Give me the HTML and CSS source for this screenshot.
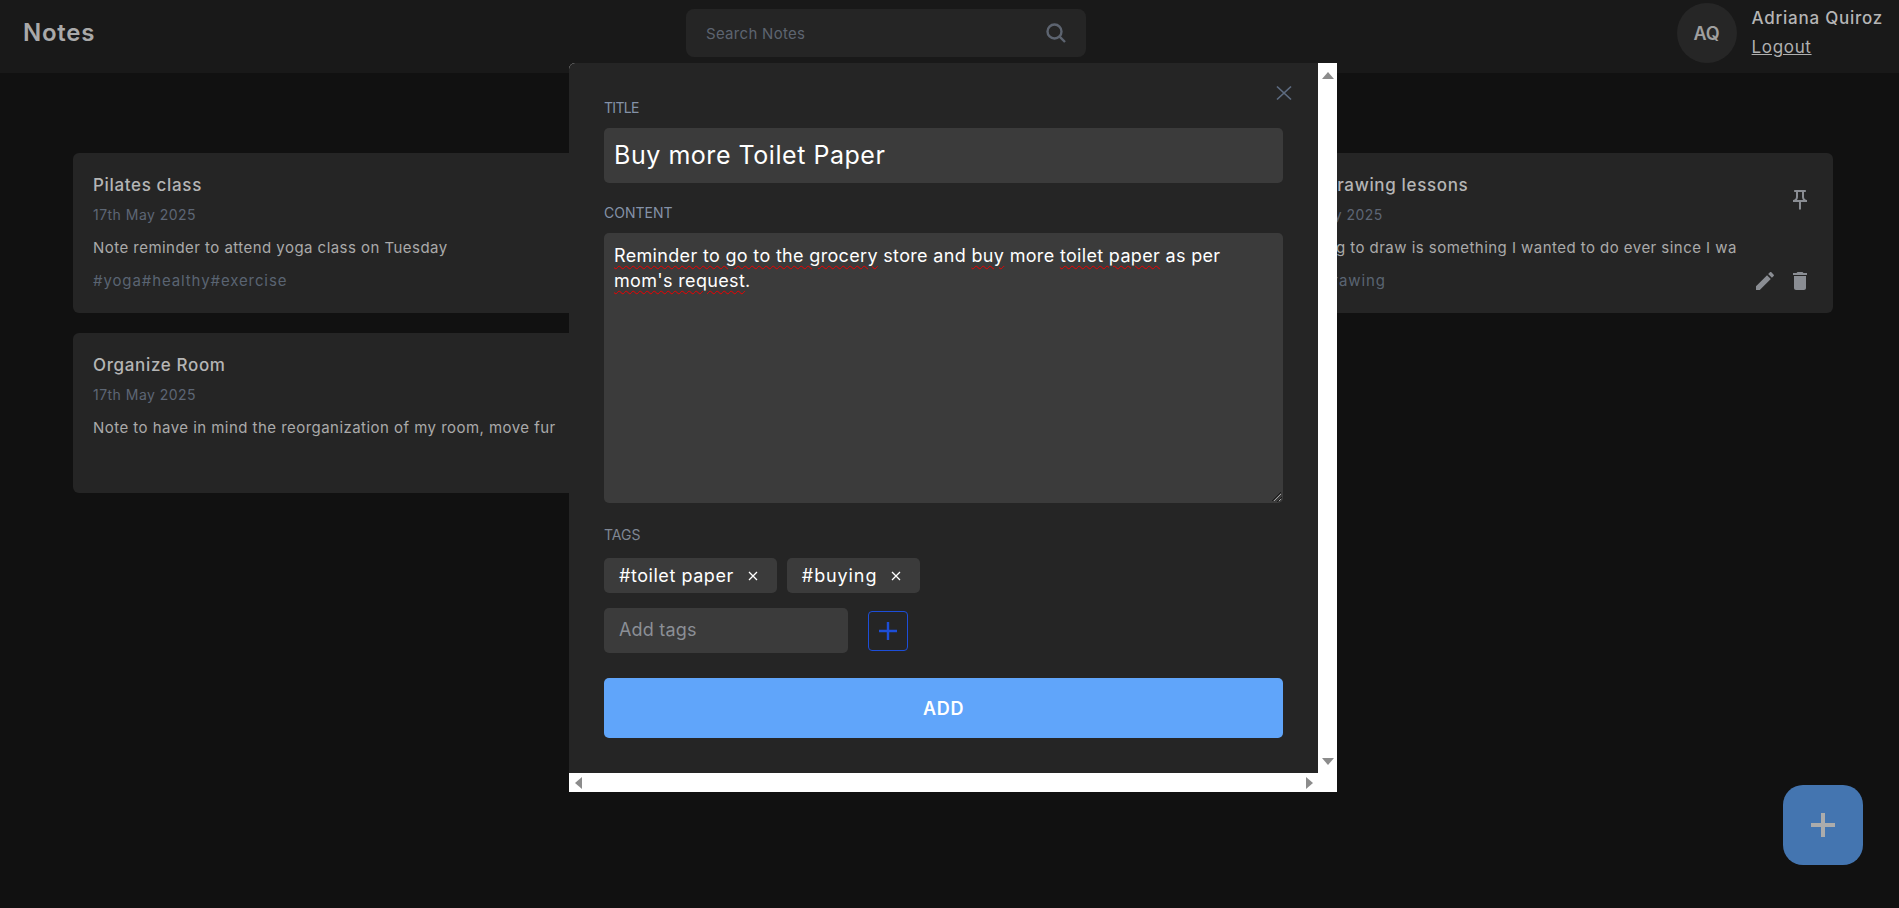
FILE: index.html
```html
<!DOCTYPE html>
<html lang="en">
<head>
<meta charset="utf-8">
<title>Notes</title>
<link rel="stylesheet" href="styles.css">
</head>
<body>
<header class="topbar">
  <h1 class="logo">Notes</h1>
  <div class="search">
    <span class="search-text">Search Notes</span>
    <svg class="search-icon" viewBox="0 0 24 24"><circle cx="10.5" cy="10.5" r="7"/><path d="M15.6 15.6 21 21"/></svg>
  </div>
  <div class="user">
    <div class="avatar">AQ</div>
    <div class="user-info">
      <div class="user-name">Adriana Quiroz</div>
      <a class="logout">Logout</a>
    </div>
  </div>
</header>

<main class="grid">
  <article class="card">
    <div class="card-body">
      <h2 class="card-title">Pilates class</h2>
      <p class="card-date">17th May 2025</p>
      <p class="card-text">Note reminder to attend yoga class on Tuesday</p>
      <p class="card-tags">#yoga#healthy#exercise</p>
    </div>
  </article>
  <article class="card"></article>
  <article class="card">
    <div class="card-body">
      <h2 class="card-title">Take drawing lessons</h2>
      <p class="card-date">17th May 2025</p>
      <p class="card-text">Learning to draw is something I wanted to do ever since I wa</p>
      <p class="card-tags">#art#drawing</p>
    </div>
    <div class="card-icons">
      <svg class="icon pin" viewBox="0 0 24 24"><path d="M14 4v5c0 1.12.37 2.16 1 3H9c.65-.86 1-1.9 1-3V4h4m3-2H7c-.55 0-1 .45-1 1s.45 1 1 1h1v5c0 1.66-1.34 3-3 3v2h5.97v7l1 1 1-1v-7H19v-2c-1.66 0-3-1.34-3-3V4h1c.55 0 1-.45 1-1s-.45-1-1-1z"/></svg>
      <div class="card-actions">
        <svg class="icon" viewBox="0 0 24 24"><path d="M3 17.25V21h3.75L17.81 9.94l-3.75-3.75L3 17.25zM20.71 7.04c.39-.39.39-1.02 0-1.41l-2.34-2.34c-.39-.39-1.02-.39-1.41 0l-1.83 1.83 3.75 3.75 1.83-1.83z"/></svg>
        <svg class="icon" viewBox="0 0 24 24"><path d="M6 19c0 1.1.9 2 2 2h8c1.1 0 2-.9 2-2V7H6v12zM19 4h-3.5l-1-1h-5l-1 1H5v2h14V4z"/></svg>
      </div>
    </div>
  </article>
  <article class="card">
    <div class="card-body">
      <h2 class="card-title">Organize Room</h2>
      <p class="card-date">17th May 2025</p>
      <p class="card-text">Note to have in mind the reorganization of my room, move fur</p>
    </div>
  </article>
</main>

<section class="modal">
  <div class="modal-main">
    <div class="modal-content">
      <svg class="close" viewBox="0 0 16 16"><path d="M1 1.5 15 14.5M15 1.5 1 14.5"/></svg>
      <div class="field">
        <label class="field-label title-label">TITLE</label>
        <div class="title-input">Buy more Toilet Paper</div>
      </div>
      <div class="field">
        <label class="field-label">CONTENT</label>
        <div class="content-input">
          <span class="typo">Reminder to go to the grocery</span> store and <span class="typo">buy</span> more <span class="typo">toilet paper</span> as per <span class="typo">mom's request</span>.
          <svg class="resizer" viewBox="0 0 10 10"><path class="resizer-dark" d="M0 9 9 0M5 10l5-5"/><path class="resizer-light" d="M2 9 9 2M7 9l2-2"/></svg>
        </div>
      </div>
      <div class="field tags-field">
        <label class="field-label tags-label">TAGS</label>
        <div class="chips">
          <span class="chip">#toilet paper<svg class="chip-x" viewBox="0 0 10 10"><path d="M1 1 9 9M9 1 1 9"/></svg></span>
          <span class="chip chip-short">#buying<svg class="chip-x" viewBox="0 0 10 10"><path d="M1 1 9 9M9 1 1 9"/></svg></span>
        </div>
        <div class="add-row">
          <div class="tag-input">Add tags</div>
          <div class="tag-add"><svg viewBox="0 0 20 20"><path d="M10 1v18M1 10h18"/></svg></div>
        </div>
      </div>
      <div class="submit">ADD</div>
    </div>
    <div class="vbar">
      <span class="arrow arrow-up"></span>
      <span class="arrow arrow-down"></span>
    </div>
  </div>
  <div class="hbar">
    <span class="arrow arrow-left"></span>
    <span class="arrow arrow-right"></span>
  </div>
</section>

<div class="fab"><svg viewBox="0 0 24 24"><path d="M12 0v24M0 12h24"/></svg></div>
</body>
</html>
```

FILE: styles.css
```css
* { box-sizing: border-box; }
html, body { margin: 0; height: 100%; }
body {
  background: #111111;
  font-family: Inter, "Open Sans", sans-serif;
  overflow: hidden;
  position: relative;
}
h1, h2, p { margin: 0; font-weight: inherit; }

.topbar {
  height: 73px;
  background: #191919;
  position: relative;
  display: flex;
  align-items: center;
  justify-content: space-between;
  padding: 0 16px 0 23px;
}
.logo { font-size: 24px; font-weight: 600; color: #a9a9a9; letter-spacing: 0.75px; line-height: 30px; margin-top: -7px; }
.search {
  position: absolute;
  left: 686px;
  top: 9px;
  width: 400px;
  height: 48px;
  background: #252525;
  border-radius: 8px;
  display: flex;
  align-items: center;
  justify-content: space-between;
  padding: 0 18px 0 20px;
  color: #5d6470;
  font-size: 15px;
  letter-spacing: 0.3px;
}
.search-icon { width: 24px; height: 24px; fill: none; stroke: #5d6470; stroke-width: 2.4; }
.user { display: flex; align-items: center; gap: 15px; height: 73px; padding-bottom: 7px; }
.avatar {
  width: 60px; height: 60px; border-radius: 50%;
  background: #262626; color: #a0a0a0;
  display: flex; align-items: center; justify-content: center;
  font-size: 18px; font-weight: 600;
}
.user-info { display: flex; flex-direction: column; gap: 5px; padding-bottom: 1px; }
.user-name { font-size: 17px; font-weight: 500; color: #b5b5b5; line-height: 24px; letter-spacing: 0.75px; }
.logout { font-size: 17px; color: #b0b0b0; line-height: 24px; text-decoration: underline; letter-spacing: 0.65px; }

.grid {
  display: grid;
  grid-template-columns: repeat(3, 1fr);
  gap: 20px;
  padding: 80px 66px 0 73px;
}
.card {
  height: 160px;
  background: #252525;
  border-radius: 6px;
  padding: 20px 21px 20px 20px;
  display: flex;
  gap: 12px;
}
.card-body { flex: 1; min-width: 0; }
.card-title { font-size: 17px; font-weight: 500; color: #b5b5b5; line-height: 24px; letter-spacing: 0.65px; white-space: nowrap; overflow: hidden; }
.card-date { font-size: 14px; color: #5d6675; line-height: 20px; letter-spacing: 0.47px; margin-top: 8px; white-space: nowrap; overflow: hidden; }
.card-text { font-size: 15px; color: #aaaaaa; line-height: 20px; letter-spacing: 0.46px; margin-top: 13px; white-space: nowrap; overflow: hidden; }
.card-tags { font-size: 15px; color: #5a6472; line-height: 20px; letter-spacing: 0.9px; margin-top: 13px; white-space: nowrap; overflow: hidden; }
.card-icons { width: 59px; flex: none; display: flex; flex-direction: column; align-items: flex-end; justify-content: space-between; }
.icon { width: 24px; height: 24px; fill: #8a8d93; display: block; }
.pin { margin-top: 15px; }
.card-actions { display: flex; gap: 11px; }

.modal {
  position: absolute;
  left: 569px;
  top: 63px;
  width: 768px;
  height: 729px;
  display: flex;
  flex-direction: column;
  background: #ffffff;
  border-radius: 6px 0 0 0;
  overflow: hidden;
}
.modal-main { flex: 1; display: flex; min-height: 0; }
.modal-content {
  flex: 1;
  background: #252525;
  padding: 35px 35px 0;
  position: relative;
}
.close {
  position: absolute;
  left: 707px;
  top: 22px;
  width: 16px;
  height: 16px;
  fill: none;
  stroke: #5d6b80;
  stroke-width: 1.7;
}
.field { margin-bottom: 20px; }
.field-label {
  display: block;
  font-size: 14px;
  line-height: 20px;
  color: #8492a8;
  margin-bottom: 10px;
}
.title-label { letter-spacing: -0.7px; }
.title-input {
  height: 55px;
  background: #3b3b3b;
  border-radius: 5px;
  padding: 0 10px;
  font-size: 25px;
  letter-spacing: 0.54px;
  line-height: 55px;
  color: #ffffff;
}
.content-input {
  height: 270px;
  background: #3b3b3b;
  border-radius: 5px;
  padding: 10px 40px 10px 10px;
  font-size: 18px;
  letter-spacing: 0.33px;
  line-height: 25px;
  color: #ffffff;
  position: relative;
}
.typo { text-decoration: underline wavy #f00000 1px; text-underline-offset: 3px; }
.resizer { position: absolute; right: 1px; bottom: 1px; width: 10px; height: 10px; fill: none; stroke-width: 1; }
.resizer-dark { stroke: #1a1a1a; }
.resizer-light { stroke: #a0a0a0; }
.tags-field { margin-top: 22px; margin-bottom: 25px; }
.tags-label { color: #7f8794; margin-bottom: 13px; }
.chips { display: flex; gap: 10px; }
.chip {
  height: 35px;
  background: #3b3b3b;
  border-radius: 5px;
  display: flex;
  align-items: center;
  padding: 0 19px 0 15px;
  font-size: 18px;
  letter-spacing: 0.55px;
  color: #ffffff;
}
.chip-short { letter-spacing: 0.9px; }
.chip-x { width: 10px; height: 10px; margin-left: 14px; fill: none; stroke: #ffffff; stroke-width: 1.3; }
.add-row { display: flex; align-items: center; gap: 20px; margin-top: 15px; }
.tag-input {
  width: 244px;
  height: 45px;
  background: #3b3b3b;
  border-radius: 5px;
  padding: 0 15px;
  font-size: 18px;
  letter-spacing: 0.2px;
  line-height: 43px;
  color: #8b8f96;
}
.tag-add {
  width: 40px;
  height: 40px;
  border: 1px solid #1d4ed8;
  border-radius: 4px;
  display: flex;
  align-items: center;
  justify-content: center;
}
.tag-add svg { width: 20px; height: 20px; fill: none; stroke: #1d4ed8; stroke-width: 2.4; }
.submit {
  height: 60px;
  background: #60a5fa;
  border-radius: 5px;
  display: flex;
  align-items: center;
  justify-content: center;
  font-size: 18px;
  font-weight: 600;
  letter-spacing: 0.7px;
  color: #ffffff;
}

.vbar {
  width: 19px;
  flex: none;
  background: #ffffff;
  display: flex;
  flex-direction: column;
  align-items: center;
  justify-content: space-between;
  padding: 9px 0 8px;
}
.hbar {
  height: 19px;
  flex: none;
  background: #ffffff;
  display: flex;
  align-items: center;
  justify-content: space-between;
  padding: 0 24px 0 6px;
}
.arrow { display: block; width: 0; height: 0; border-style: solid; border-color: transparent; }
.arrow-up { border-width: 0 6.5px 7px; border-bottom-color: #8c8c8c; }
.arrow-down { border-width: 7px 6.5px 0; border-top-color: #8c8c8c; }
.arrow-left { border-width: 6.5px 7px 6.5px 0; border-right-color: #8c8c8c; }
.arrow-right { border-width: 6.5px 0 6.5px 7px; border-left-color: #8c8c8c; }

.fab {
  position: absolute;
  left: 1783px;
  top: 785px;
  width: 80px;
  height: 80px;
  border-radius: 20px;
  background: #4475b0;
  display: flex;
  align-items: center;
  justify-content: center;
}
.fab svg { width: 24px; height: 24px; fill: none; stroke: #acacac; stroke-width: 4; }
```
